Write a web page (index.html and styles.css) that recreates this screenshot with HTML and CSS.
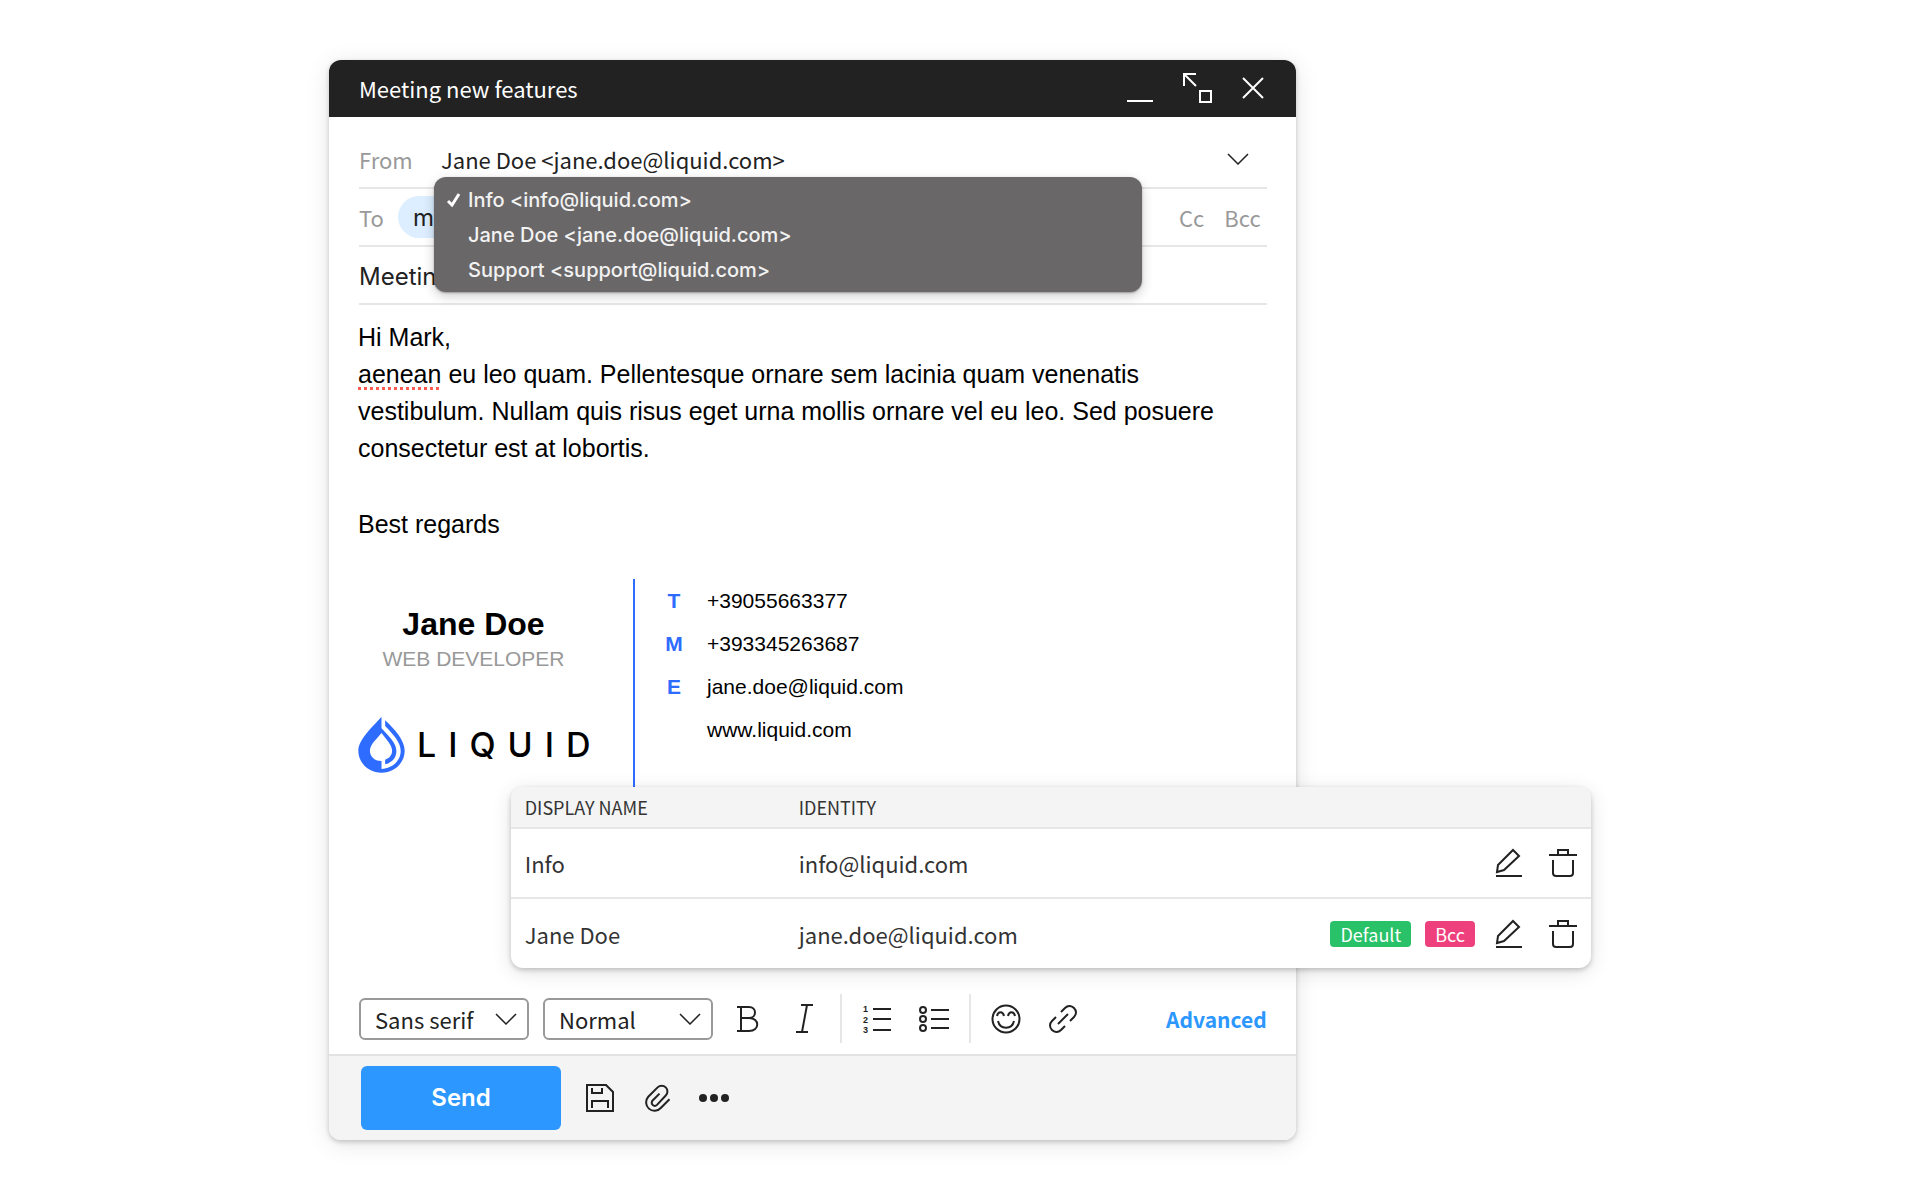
FILE: index.html
```
<!DOCTYPE html>
<html lang="en">
<head>
    <meta charset="UTF-8">
    <meta name="viewport" content="width=device-width, initial-scale=1.0">
    <title>Meeting new features</title>
    <link rel="stylesheet" href="styles.css">
</head>
<body>
    <main class="stage">
        <form class="composer">
            <header class="titlebar">
                <h1>Meeting new features</h1>
                <div class="window-buttons">
                    <button type="button" aria-label="Minimize">
                        <svg width="28" height="30" viewBox="0 0 28 30"><path d="M1 28h26"/></svg>
                    </button>
                    <button type="button" aria-label="Resize">
                        <svg width="30" height="30" viewBox="0 0 30 30"><path d="M1 13V1h12M1 1l12 12M17 18h11v11H17z"/></svg>
                    </button>
                    <button type="button" aria-label="Close">
                        <svg width="22" height="22" viewBox="0 0 22 22"><path d="M1 1l20 20M21 1L1 21"/></svg>
                    </button>
                </div>
            </header>

            <div class="fields">
                <div class="field from">
                    <label for="from">From</label>
                    <div class="select">
                        <select id="from">
                            <option>Jane Doe &lt;jane.doe@liquid.com&gt;</option>
                        </select>
                        <svg class="chevron" width="22" height="12" viewBox="0 0 22 12"><path d="M1 1l10 10L21 1"/></svg>
                    </div>
                    <ul class="menu">
                        <li><button type="button"><svg width="15" height="15" viewBox="0 0 15 15"><path d="M2 9l4 4 7-11"/></svg>Info &lt;info@liquid.com&gt;</button></li>
                        <li><button type="button">Jane Doe &lt;jane.doe@liquid.com&gt;</button></li>
                        <li><button type="button">Support &lt;support@liquid.com&gt;</button></li>
                    </ul>
                </div>
                <div class="field to">
                    <span class="label">To</span>
                    <span class="chip">mark</span>
                    <div class="copies">
                        <button type="button">Cc</button>
                        <button type="button">Bcc</button>
                    </div>
                </div>
                <div class="field subject">
                    <input type="text" aria-label="Subject" value="Meeting new features">
                </div>
            </div>

            <div class="message">
                <p>Hi Mark,<br>
                <span class="misspelled">aenean</span> eu leo quam. Pellentesque ornare sem lacinia quam venenatis<br>
                vestibulum. Nullam quis risus eget urna mollis ornare vel eu leo. Sed posuere<br>
                consectetur est at lobortis.</p>
                <p>Best regards</p>

                <div class="signature">
                    <div class="person">
                        <h2>Jane Doe</h2>
                        <p class="role">WEB DEVELOPER</p>
                        <div class="logo">
                            <svg width="47" height="57" viewBox="54 441 142 172">
                                <path d="M125 443C102 470 55 510 55 546C55 584 87 612 125 612C163 612 195 584 195 546C195 515 166 482 136 454L136 471C160 496 183 520 183 547C183 577 157 599 125 601L125 577C102 577 90 562 90 546C90 526 112 509 125 492C137 509 157 527 157 546C157 559 149 569 136 573L136 587C158 582 170 566 170 547C170 522 148 503 125 478Z"/>
                            </svg>
                            <span>LIQUID</span>
                        </div>
                    </div>
                    <ul class="contacts">
                        <li><b>T</b><span>+39055663377</span></li>
                        <li><b>M</b><span>+393345263687</span></li>
                        <li><b>E</b><span>jane.doe@liquid.com</span></li>
                        <li><b></b><span>www.liquid.com</span></li>
                    </ul>
                </div>
            </div>

            <div class="toolbar">
                <div class="select boxed">
                    <select aria-label="Font">
                        <option>Sans serif</option>
                    </select>
                    <svg class="chevron" width="22" height="12" viewBox="0 0 22 12"><path d="M1 1l10 10L21 1"/></svg>
                </div>
                <div class="select boxed">
                    <select aria-label="Text size">
                        <option>Normal</option>
                    </select>
                    <svg class="chevron" width="22" height="12" viewBox="0 0 22 12"><path d="M1 1l10 10L21 1"/></svg>
                </div>
                <div class="tools">
                    <button type="button" aria-label="Bold">
                        <svg width="30" height="30" viewBox="0 0 30 30"><path d="M4 3h12c8 0 8 11 0 11H8M16 14c11 0 11 13 0 13H4M8 3v24"/></svg>
                    </button>
                    <button type="button" aria-label="Italic">
                        <svg width="30" height="30" viewBox="0 0 30 30"><path d="M11 1h12M6 28h12M17 1l-5 27"/></svg>
                    </button>
                </div>
                <div class="tools">
                    <button type="button" aria-label="Numbered list">
                        <svg width="30" height="32" viewBox="0 0 30 32">
                            <path d="M11 6h18M11 16h18M11 27h18"/>
                            <text x="1" y="9">1</text><text x="1" y="20">2</text><text x="1" y="30">3</text>
                        </svg>
                    </button>
                    <button type="button" aria-label="Bulleted list">
                        <svg width="30" height="30" viewBox="0 0 30 30"><path d="M12 6h18M12 15h18M12 24h18"/><circle cx="4" cy="6" r="3"/><circle cx="4" cy="15" r="3"/><circle cx="4" cy="24" r="3"/></svg>
                    </button>
                </div>
                <div class="tools">
                    <button type="button" aria-label="Emoji">
                        <svg width="30" height="30" viewBox="0 0 30 30"><circle cx="15" cy="15" r="13.5"/><path d="M6 12c1-5 6-5 7 0M17 12c1-5 6-5 7 0M7 17c2 9 14 9 16 0"/></svg>
                    </button>
                    <button type="button" aria-label="Link">
                        <svg width="30" height="30" viewBox="0 0 30 30"><path d="M13 8l4-4c6-6 15 3 9 9l-4 4M17 22l-4 4c-6 6-15-3-9-9l4-4M10 20L20 10"/></svg>
                    </button>
                </div>
                <a class="advanced" href="#">Advanced</a>
            </div>

            <footer class="actions">
                <button type="submit" class="send">Send</button>
                <button type="button" aria-label="Save draft">
                    <svg width="30" height="30" viewBox="0 0 30 30"><path d="M2 2h19l7 7v19H2zM7 5v5h10V5M7 25v-7h16v7"/></svg>
                </button>
                <button type="button" aria-label="Attach file">
                    <svg class="clip" width="30" height="30" viewBox="0 0 24 24"><path d="M22 13l-7 7a6.5 6.5 0 0 1-10-9l7.500-7.500a4.500 4.500 0 0 1 6.500 6.500l-7 7.500a2.300 2.300 0 0 1-3.500-3.500l5.500-5.500"/></svg>
                </button>
                <button type="button" aria-label="More">
                    <svg class="dots" width="30" height="30" viewBox="0 0 30 30"><circle cx="4" cy="15" r="4"/><circle cx="15" cy="15" r="4"/><circle cx="26" cy="15" r="4"/></svg>
                </button>
            </footer>
        </form>

        <section class="identities">
            <table>
                <thead>
                    <tr>
                        <th>DISPLAY NAME</th>
                        <th>IDENTITY</th>
                        <th></th>
                    </tr>
                </thead>
                <tbody>
                    <tr>
                        <td>Info</td>
                        <td>info@liquid.com</td>
                        <td>
                            <div class="row-actions">
                                <button type="button" aria-label="Edit Info">
                                    <svg width="28" height="30" viewBox="0 0 28 30"><path d="M1 28h26M2 24l1-7L18 2l6 6L9 22z"/></svg>
                                </button>
                                <button type="button" aria-label="Delete Info">
                                    <svg width="28" height="30" viewBox="0 0 28 30"><path d="M0 7h28M9 7V2h10v5M4 12v13c0 2 1 3 3 3h14c2 0 3-1 3-3V12"/></svg>
                                </button>
                            </div>
                        </td>
                    </tr>
                    <tr>
                        <td>Jane Doe</td>
                        <td>jane.doe@liquid.com</td>
                        <td>
                            <div class="row-actions">
                                <span class="tag green">Default</span>
                                <span class="tag pink">Bcc</span>
                                <button type="button" aria-label="Edit Jane Doe">
                                    <svg width="28" height="30" viewBox="0 0 28 30"><path d="M1 28h26M2 24l1-7L18 2l6 6L9 22z"/></svg>
                                </button>
                                <button type="button" aria-label="Delete Jane Doe">
                                    <svg width="28" height="30" viewBox="0 0 28 30"><path d="M0 7h28M9 7V2h10v5M4 12v13c0 2 1 3 3 3h14c2 0 3-1 3-3V12"/></svg>
                                </button>
                            </div>
                        </td>
                    </tr>
                </tbody>
            </table>
        </section>
    </main>
</body>
</html>
```
FILE: styles.css
```
/* General Styles */
* {
    box-sizing: border-box;
}

body {
    margin: 0;
    padding: 60px 20px;
    background: #fff;
    color: #222;
    font-family: "Noto Sans CJK JP", "Open Sans", sans-serif;
    font-size: 22px;
    line-height: 32px;
}

h1, h2, p, ul {
    margin: 0;
    padding: 0;
}

ul {
    list-style: none;
}

button, input, select {
    font: inherit;
    color: inherit;
    background: none;
    border: none;
    padding: 0;
    margin: 0;
    outline: none;
}

button {
    display: flex;
    align-items: center;
    justify-content: center;
    cursor: pointer;
}

svg {
    display: block;
    flex: none;
    fill: none;
    stroke: #222;
    stroke-width: 2;
}

.stage {
    position: relative;
    max-width: 1262px;
    margin: 0 auto;
}

/* Composer window */
.composer {
    display: flex;
    flex-direction: column;
    width: 76.6%;
    min-height: 1080px;
    border-radius: 12px;
    background: #fff;
    box-shadow: 0 2px 5px rgba(0, 0, 0, 0.2), 0 4px 24px rgba(0, 0, 0, 0.1);
}

.titlebar {
    display: flex;
    align-items: center;
    justify-content: space-between;
    height: 57px;
    padding: 0 32px 2px 30px;
    border-radius: 12px 12px 0 0;
    background: #222;
    color: #fff;
}

.titlebar h1 {
    font-size: 22px;
    font-weight: 400;
}

.window-buttons {
    display: flex;
    align-items: center;
    gap: 29px;
}

.window-buttons svg {
    stroke: #fff;
}

/* Header fields */
.fields {
    padding: 14px 29px 0 30px;
}

.field {
    position: relative;
    display: flex;
    align-items: center;
    height: 58px;
    border-bottom: 2px solid #e6e6e6;
}

.field label,
.field .label,
.copies {
    color: #999;
}

.from label {
    width: 82px;
}

.select {
    position: relative;
    display: flex;
    align-items: center;
    flex: 1;
}

.select select {
    width: 100%;
    appearance: none;
}

.chevron {
    position: absolute;
    right: 18px;
    pointer-events: none;
}

.to {
    gap: 14px;
}

.chip {
    width: 160px;
    padding: 6px 15px 4px;
    border-radius: 21px;
    background: #dceeff;
    font-family: Inter, sans-serif;
    font-size: 24px;
}

.copies {
    display: flex;
    gap: 20px;
    margin-left: auto;
    padding-right: 6px;
}

.subject input {
    width: 100%;
    padding-top: 4px;
    font-family: Inter, sans-serif;
    font-size: 24px;
}

/* Sender menu */
.menu {
    position: absolute;
    z-index: 1;
    top: 46px;
    left: 75px;
    width: 78%;
    padding: 5px 0;
    border-radius: 12px;
    background: #696768;
    box-shadow: 0 1px 2px rgba(0, 0, 0, 0.3), 0 4px 12px rgba(0, 0, 0, 0.2);
    color: #f2f2f2;
    font-family: Inter, sans-serif;
    font-size: 20px;
    font-weight: 500;
}

.menu button {
    position: relative;
    justify-content: flex-start;
    width: 100%;
    height: 35px;
    padding-left: 34px;
}

.menu svg {
    position: absolute;
    left: 12px;
    stroke: #fff;
    stroke-width: 3;
}

/* Message */
.message {
    flex: 1;
    padding: 14px 29px;
    color: #000;
    font-family: "Liberation Sans", Arial, sans-serif;
    font-size: 25px;
    line-height: 37px;
}

.message p + p {
    margin-top: 39px;
}

.misspelled {
    text-decoration: underline dotted #ff5a52 3px;
    text-underline-offset: 4px;
}

.signature {
    display: flex;
    margin-top: 36px;
    font-size: 21px;
}

.person {
    width: 277px;
    height: 209px;
    padding: 27px 44px 0 0;
    border-right: 2px solid #2e6bff;
    text-align: center;
}

.person h2 {
    font-size: 32px;
}

.message .role {
    margin: 0;
    color: #999;
    line-height: 32px;
}

.logo {
    display: flex;
    align-items: center;
    gap: 12px;
    margin-top: 41px;
}

.logo svg {
    fill: #2e6bff;
    stroke: none;
}

.logo span {
    font-family: Inter, sans-serif;
    font-size: 34px;
    font-weight: 500;
    letter-spacing: 12px;
}

.contacts {
    padding-left: 24px;
}

.contacts li {
    display: grid;
    grid-template-columns: 30px 1fr;
    gap: 18px;
    line-height: 43px;
}

.contacts b {
    color: #2e6bff;
    text-align: center;
}

/* Formatting toolbar */
.toolbar {
    display: flex;
    align-items: center;
    gap: 14px;
    padding: 0 29px 11px 30px;
}

.boxed {
    flex: none;
    width: 170px;
}

.boxed select {
    height: 42px;
    padding: 0 14px;
    border: 2px solid #999;
    border-radius: 6px;
}

.boxed .chevron {
    right: 12px;
}

.chevron path {
    stroke-width: 1.5;
}

.tools {
    display: flex;
    align-items: center;
    gap: 27px;
    height: 49px;
    padding: 0 6px;
}

.tools + .tools {
    padding-left: 20px;
    border-left: 2px solid #e6e6e6;
}

.tools text {
    fill: #222;
    stroke: none;
    font-family: "Liberation Sans", sans-serif;
    font-size: 9px;
    font-weight: 700;
}

.advanced {
    margin-left: auto;
    color: #2c97ff;
    font-size: 21px;
    font-weight: 700;
    text-decoration: none;
}

/* Send bar */
.actions {
    display: flex;
    align-items: center;
    gap: 27px;
    height: 86px;
    padding: 0 32px;
    border-top: 2px solid #e2e2e2;
    border-radius: 0 0 12px 12px;
    background: #f4f4f4;
}

.send {
    width: 200px;
    height: 64px;
    margin-right: -3px;
    border-radius: 6px;
    background: #2c97ff;
    color: #fff;
    font-family: Inter, sans-serif;
    font-size: 24px;
    font-weight: 600;
}

.actions .clip {
    stroke-width: 1.6;
}

.actions .dots {
    fill: #222;
    stroke: none;
}

/* Identities panel */
.identities {
    position: absolute;
    z-index: 2;
    top: 727px;
    right: 0;
    width: 85.6%;
    border-radius: 12px;
    background: #fff;
    box-shadow: 0 2px 5px rgba(0, 0, 0, 0.2), 0 4px 20px rgba(0, 0, 0, 0.12);
    overflow: hidden;
}

.identities table {
    width: 100%;
    border-collapse: collapse;
    color: #333;
}

.identities th,
.identities td {
    height: 70px;
    padding: 0 14px;
    text-align: left;
}

.identities th {
    height: 41px;
    background: #f4f4f4;
    font-size: 18px;
    font-weight: 400;
}

.identities th:first-child {
    width: 274px;
}

.identities tr + tr,
.identities tbody {
    border-top: 2px solid #e6e6e6;
}

.row-actions {
    display: flex;
    align-items: center;
    justify-content: flex-end;
    gap: 14px;
}

.row-actions button {
    margin-left: 6px;
}

.row-actions button + button {
    margin-left: 12px;
}

.tag {
    padding: 0 10px;
    border-radius: 4px;
    color: #fff;
    font-size: 18px;
    line-height: 26px;
}

.green {
    background: #29c268;
}

.pink {
    background: #ee407c;
}
```
